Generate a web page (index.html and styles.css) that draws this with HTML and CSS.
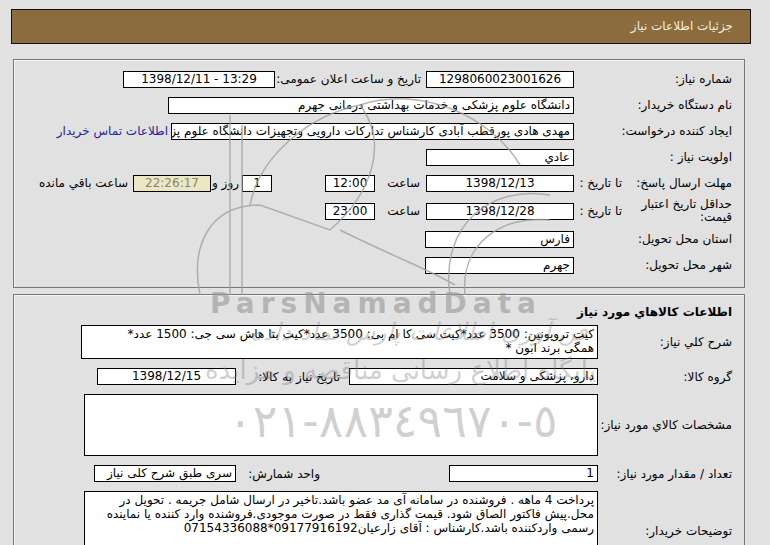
FILE: index.html
```html
<!DOCTYPE html>
<html lang="fa" dir="rtl">
<head>
    <meta charset="UTF-8">
    <title>جزئیات اطلاعات نیاز</title>
    <link rel="stylesheet" href="styles.css">
</head>
<body>

<div class="page-title">جزئیات اطلاعات نیاز</div>

<!-- main info -->
<div class="panel panel-info">
    <div class="row">
        <div class="lbl">شماره نیاز:</div>
        <div class="box w148 center">1298060023001626</div>
        <div class="lbl-mid">تاریخ و ساعت اعلان عمومی:</div>
        <div class="box w152 center ltr">1398/12/11 - 13:29</div>
    </div>
    <div class="row">
        <div class="lbl">نام دستگاه خریدار:</div>
        <div class="box w406">دانشگاه علوم پزشکی و خدمات بهداشتی درمانی جهرم</div>
    </div>
    <div class="row">
        <div class="lbl">ایجاد کننده درخواست:</div>
        <div class="box w403">مهدی هادی پورقطب آبادی کارشناس تدارکات دارویی وتجهیزات دانشگاه علوم پزشکی جهرم</div>
        <a href="#" class="contact-link">اطلاعات تماس خریدار</a>
    </div>
    <div class="row">
        <div class="lbl">اولویت نیاز :</div>
        <div class="box w148">عادي</div>
    </div>
    <div class="row">
        <div class="lbl-main">مهلت ارسال پاسخ:</div>
        <div class="lbl-sub">تا تاریخ :</div>
        <div class="box w148 center">1398/12/13</div>
        <div class="unit">ساعت</div>
        <div class="box w50 center">12:00</div>
        <div class="box w30 center gap-day">1</div>
        <div class="unit-day">روز و</div>
        <div class="box w78 center remain">22:26:17</div>
        <div class="remain-lbl">ساعت باقي مانده</div>
    </div>
    <div class="row row-tall">
        <div class="lbl-main">حداقل تاریخ اعتبار قیمت:</div>
        <div class="lbl-sub">تا تاریخ :</div>
        <div class="box w148 center">1398/12/28</div>
        <div class="unit">ساعت</div>
        <div class="box w50 center">23:00</div>
    </div>
    <div class="row">
        <div class="lbl">استان محل تحویل:</div>
        <div class="box w149">فارس</div>
    </div>
    <div class="row">
        <div class="lbl">شهر محل تحویل:</div>
        <div class="box w149">جهرم</div>
    </div>
</div>

<!-- goods -->
<div class="panel panel-goods">
    <div class="panel-head">اطلاعات کالاهاي مورد نیاز</div>
    <div class="row2">
        <div class="lbl2">شرح کلي نیاز:</div>
        <div class="area w517 h34">کیت تروپونین: 3500 عدد*کیت سی کا ام بی: 3500 عدد*کیت بتا هاش سی جی: 1500 عدد*<br>همگی برند ابون *</div>
    </div>
    <div class="row2">
        <div class="lbl2">گروه کالا:</div>
        <div class="box w249">دارو، پزشکی و سلامت</div>
        <div class="lbl-need">تاریخ نیاز به کالا:</div>
        <div class="box w139 center">1398/12/15</div>
    </div>
    <div class="row2">
        <div class="lbl2">مشخصات کالاي مورد نیاز:</div>
        <div class="area w514 h62"></div>
    </div>
    <div class="row2">
        <div class="lbl2">تعداد / مقدار مورد نیاز:</div>
        <div class="box w149">1</div>
        <div class="lbl-unit">واحد شمارش:</div>
        <div class="box w142">سری طبق شرح کلی نیاز</div>
    </div>
    <div class="row2">
        <div class="lbl2">توضیحات خریدار:</div>
        <div class="area w514 h80">پرداخت 4 ماهه . فروشنده در سامانه آی مد عضو باشد.تاخیر در ارسال شامل جریمه  . تحویل در<br>محل.پیش فاکتور الصاق شود. قیمت گذاری فقط در صورت موجودی.فروشنده وارد کننده یا نماینده<br>رسمی واردکننده باشد.کارشناس : آقای زارعیان09177916192*07154336088</div>
    </div>
</div>

<!-- watermark over the page -->
<div class="watermark">
    <svg class="wm-logo" width="380" height="240" viewBox="0 0 380 240">
        <g fill="none" stroke="#a2a2a2" stroke-width="1.5">
            <path d="M40 240 V60 M52 240 V70"/>
            <path d="M10 240 C0 190 20 150 70 150 L140 175 C180 140 200 90 170 50"/>
            <path d="M260 240 C250 170 300 130 360 140"/>
            <path d="M275 240 C270 190 310 160 360 165"/>
            <path d="M60 150 C70 100 120 60 170 50 C230 30 300 60 330 110"/>
            <path d="M150 175 C200 200 240 215 265 230"/>
        </g>
    </svg>
    <div class="wm-brand">ParsNamadData</div>
    <div class="wm-fa1">فن آوری اطلاعات پارس نماد داده</div>
    <div class="wm-fa2">پایگاه اطلاع رسانی مناقصه و مزایده</div>
    <div class="wm-phone">٠٢١-٨٨٣٤٩٦٧٠-٥</div>
</div>

</body>
</html>
```

FILE: styles.css
```css
body {
    margin: 0;
    background-color: #e1e1e1;
    font-family: Tahoma, "DejaVu Sans", sans-serif;
    font-size: 12px;
    color: #000;
    direction: rtl;
    position: relative;
    height: 545px;
    overflow: hidden;
}

.page-title {
    margin: 9px 19px 0 11px;
    height: 33px;
    line-height: 33px;
    padding-right: 17px;
    background-color: #8c6c3e;
    border: 1px solid #111;
    color: #f5eedd;
    font-size: 12px;
}

.panel {
    margin: 0 25px 0 13px;
    border: 1px solid #777;
    box-shadow: inset 1px 1px 0 #f4f4f4;
}

.panel-info {
    margin-top: 15px;
    padding: 6px 12px 9px 0;
    height: 212px;
}

.panel-goods {
    margin-top: 6px;
    padding: 10px 12px 0 0;
    height: 260px;
}

/* rows */
.row {
    display: flex;
    align-items: center;
    height: 26px;
}

.row-tall {
    height: 30px;
}

.lbl {
    width: 158px;
    flex: none;
}

.lbl-main {
    width: 100px;
    flex: none;
    line-height: 13px;
}

.lbl-sub {
    width: 58px;
    flex: none;
    padding-right: 10px;
    box-sizing: border-box;
}

.lbl-mid {
    width: 151px;
    flex: none;
    padding-right: 5px;
    box-sizing: border-box;
}

.unit {
    width: 51px;
    flex: none;
    padding-right: 6px;
    box-sizing: border-box;
}

.unit-day {
    width: 31px;
    flex: none;
    padding-right: 3px;
    box-sizing: border-box;
}

.gap-day {
    margin-right: 53px;
}

.remain-lbl {
    margin-right: 5px;
    white-space: nowrap;
}

.contact-link {
    margin-right: 3px;
    color: #23239b;
    text-decoration: none;
    white-space: nowrap;
}

/* input-like boxes */
.box {
    height: 17px;
    line-height: 15px;
    padding: 0 3px;
    box-sizing: border-box;
    border: 1px solid #000;
    background-color: #fff;
    white-space: nowrap;
    overflow: hidden;
    flex: none;
}

.area {
    padding: 1px 3px;
    box-sizing: border-box;
    border: 1px solid #000;
    background-color: #fff;
    line-height: 14px;
    white-space: nowrap;
    flex: none;
}

.center { text-align: center; }
.ltr { direction: ltr; }

.remain {
    background-color: #ebe7c3;
    color: #85837a;
}

.w30 { width: 30px; }
.w50 { width: 50px; }
.w78 { width: 78px; }
.w139 { width: 139px; }
.w142 { width: 142px; }
.w148 { width: 148px; }
.w149 { width: 149px; }
.w152 { width: 152px; }
.w249 { width: 249px; }
.w403 { width: 403px; }
.w406 { width: 406px; }
.w514 { width: 514px; }
.w517 { width: 517px; }

.h34 { height: 34px; }
.h62 { height: 62px; }
.h80 { height: 80px; }

/* goods panel */
.panel-head {
    font-weight: bold;
    height: 14px;
    line-height: 14px;
    margin-bottom: 6px;
}

.row2 {
    display: flex;
    align-items: center;
    margin-bottom: 9px;
}

.lbl2 {
    width: 134px;
    flex: none;
}

.lbl-need {
    width: 113px;
    flex: none;
    padding-right: 9px;
    box-sizing: border-box;
}

.lbl-unit {
    width: 213px;
    flex: none;
    padding-right: 129px;
    box-sizing: border-box;
    white-space: nowrap;
}

/* watermark */
.watermark {
    position: absolute;
    left: 0;
    top: 0;
    width: 770px;
    height: 545px;
    pointer-events: none;
    color: rgba(120, 120, 120, 0.35);
}

.wm-logo {
    position: absolute;
    left: 190px;
    top: 55px;
    opacity: 0.8;
}

.wm-brand {
    position: absolute;
    left: 210px;
    top: 287px;
    direction: ltr;
    font-family: "DejaVu Sans", sans-serif;
    font-weight: bold;
    font-size: 28px;
    letter-spacing: 6px;
    color: rgba(150, 150, 150, 0.6);
}

.wm-fa1 {
    position: absolute;
    left: 250px;
    top: 318px;
    font-size: 24px;
    font-style: italic;
    white-space: nowrap;
}

.wm-fa2 {
    position: absolute;
    left: 205px;
    top: 355px;
    font-size: 26px;
    white-space: nowrap;
}

.wm-phone {
    position: absolute;
    left: 228px;
    top: 394px;
    direction: ltr;
    unicode-bidi: bidi-override;
    font-size: 46px;
    white-space: nowrap;
}
```
